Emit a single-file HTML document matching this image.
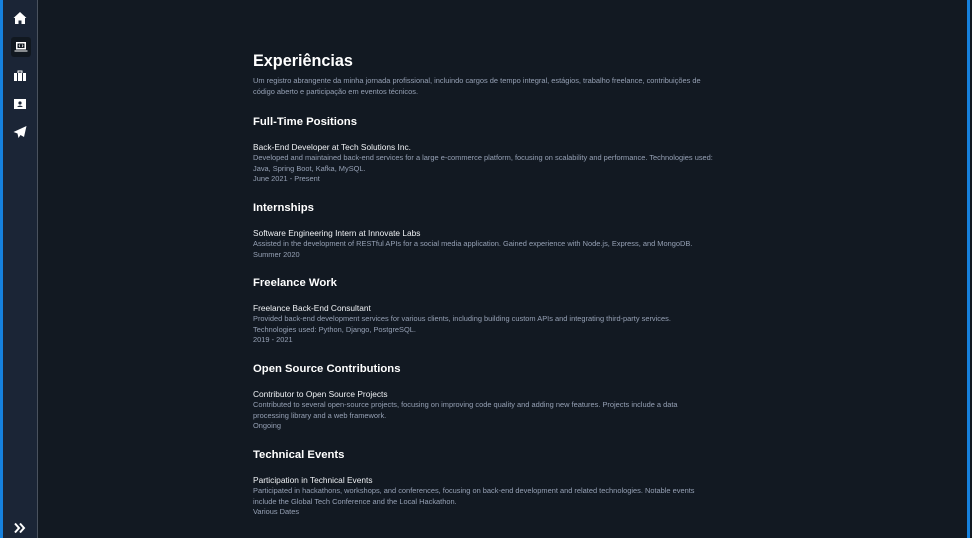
<!DOCTYPE html>
<html><head><meta charset="utf-8"><style>
*{margin:0;padding:0;box-sizing:border-box}
body{width:972px;height:538px;background:#121922;font-family:"Liberation Sans",sans-serif;position:relative;overflow:hidden;color:#fff}
#sb{position:absolute;left:0;top:0;width:38px;height:538px;background:#1b2536;border-left:3px solid #1681de;border-right:1px solid #4a525e}
#rb{position:absolute;left:967px;top:0;width:3px;height:538px;background:#1681de}
.ic{position:absolute;left:12px;width:16px;height:16px}
.t{position:absolute;left:253px;white-space:nowrap}
.h1{font-size:16.2px;font-weight:bold;line-height:20px}
.h2{font-size:11.3px;font-weight:bold;line-height:14px}
.jt{font-size:8.35px;line-height:10px;color:#f0f2f5}
.d{font-size:7.43px;line-height:10.7px;color:#95a0b4}
</style></head><body>
<div id="sb"></div>
<div id="rb"></div>
<svg class="ic" style="top:10px" viewBox="0 0 16 16"><path d="M8 2 L1.5 8 L3 8 L3 14 L6.5 14 L6.5 10.5 L9.5 10.5 L9.5 14 L13 14 L13 8 L14.5 8 Z" fill="#fff"/></svg>
<div style="position:absolute;left:11px;top:37px;width:20px;height:20px;border-radius:3px;background:#111820"></div>
<svg class="ic" style="top:39px;left:13px" viewBox="0 0 16 16"><rect x="3" y="3" width="10" height="7.5" fill="#fff"/><rect x="4.5" y="4.5" width="7" height="4.5" fill="#111820"/><path d="M1.5 11.5 H14.5 V12.5 H1.5Z" fill="#fff"/><path d="M7 5.5 L6 6.8 L7 8 M9 5.5 L10 6.8 L9 8" stroke="#fff" stroke-width=".7" fill="none"/></svg>
<svg class="ic" style="top:68px" viewBox="0 0 16 16"><rect x="2" y="5" width="12" height="8" fill="#fff"/><rect x="6" y="3" width="4" height="2.2" fill="none" stroke="#fff" stroke-width="1"/><rect x="5" y="5" width="1" height="8" fill="#1b2536"/><rect x="10" y="5" width="1" height="8" fill="#1b2536"/></svg>
<svg class="ic" style="top:96px" viewBox="0 0 16 16"><rect x="2" y="3" width="12" height="10" fill="#fff"/><circle cx="8" cy="7" r="1.6" fill="#1b2536"/><path d="M5 11 Q8 8 11 11Z" fill="#1b2536"/></svg>
<svg class="ic" style="top:124px" viewBox="0 0 16 16"><path d="M14.5 2 L1.5 8 L5.5 9.5 L6.5 14 L8.5 11 L12 13 Z" fill="#fff"/></svg>
<svg class="ic" style="top:520px" viewBox="0 0 16 16"><path d="M3 3.5 L7 8 L3 12.5 M8 3.5 L12 8 L8 12.5" stroke="#fff" stroke-width="2" fill="none"/></svg>

<div class="t h1" style="top:51px">Experiências</div>
<div class="t d" style="top:76px">Um registro abrangente da minha jornada profissional, incluindo cargos de tempo integral, estágios, trabalho freelance, contribuições de<br>código aberto e participação em eventos técnicos.</div>

<div class="t h2" style="top:115px">Full-Time Positions</div>
<div class="t jt" style="top:142px">Back-End Developer at Tech Solutions Inc.</div>
<div class="t d" style="top:153px">Developed and maintained back-end services for a large e-commerce platform, focusing on scalability and performance. Technologies used:<br>Java, Spring Boot, Kafka, MySQL.<br>June 2021 - Present</div>

<div class="t h2" style="top:201px">Internships</div>
<div class="t jt" style="top:228px">Software Engineering Intern at Innovate Labs</div>
<div class="t d" style="top:239px">Assisted in the development of RESTful APIs for a social media application. Gained experience with Node.js, Express, and MongoDB.<br>Summer 2020</div>

<div class="t h2" style="top:276px">Freelance Work</div>
<div class="t jt" style="top:303px">Freelance Back-End Consultant</div>
<div class="t d" style="top:314px">Provided back-end development services for various clients, including building custom APIs and integrating third-party services.<br>Technologies used: Python, Django, PostgreSQL.<br>2019 - 2021</div>

<div class="t h2" style="top:362px">Open Source Contributions</div>
<div class="t jt" style="top:389px">Contributor to Open Source Projects</div>
<div class="t d" style="top:400px">Contributed to several open-source projects, focusing on improving code quality and adding new features. Projects include a data<br>processing library and a web framework.<br>Ongoing</div>

<div class="t h2" style="top:448px">Technical Events</div>
<div class="t jt" style="top:475px">Participation in Technical Events</div>
<div class="t d" style="top:486px">Participated in hackathons, workshops, and conferences, focusing on back-end development and related technologies. Notable events<br>include the Global Tech Conference and the Local Hackathon.<br>Various Dates</div>
</body></html>
